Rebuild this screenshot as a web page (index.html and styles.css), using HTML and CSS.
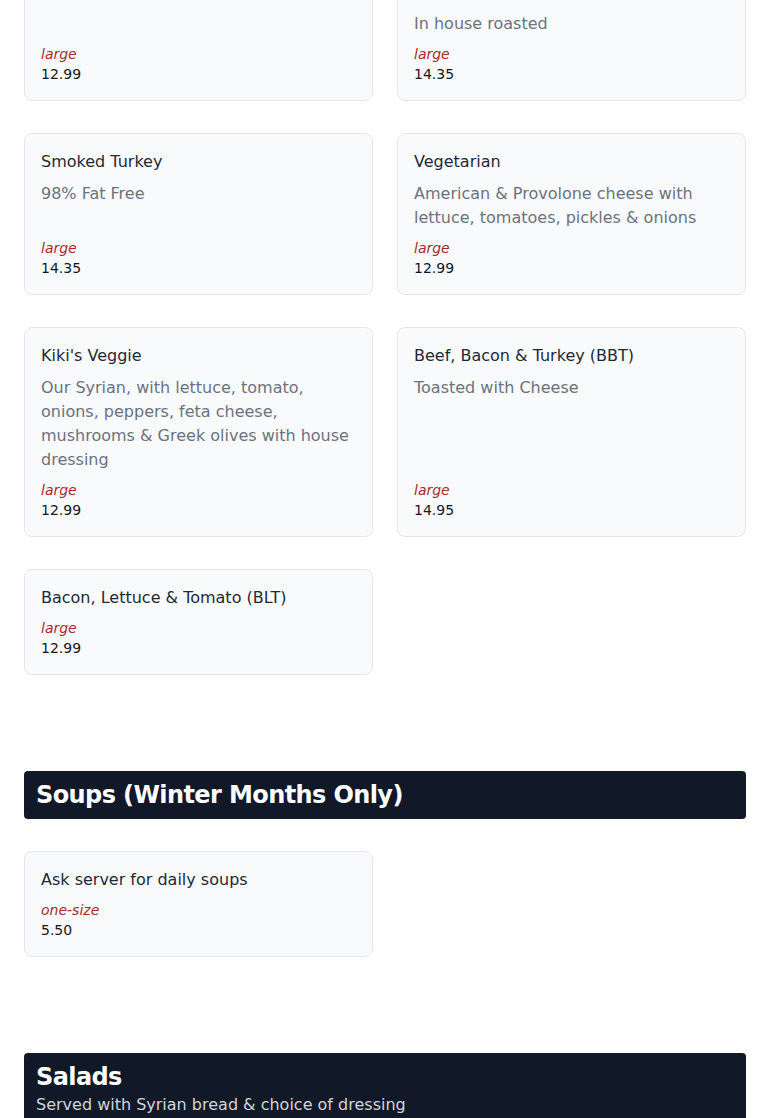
FILE: index.html
```html
<!DOCTYPE html>
<html lang="en">
<head>
<meta charset="utf-8">
<title>Menu</title>
<link rel="stylesheet" href="styles.css">
</head>
<body>
<main class="menu">
  <section class="section section-cut">
    <div class="grid">
      <article class="card">
        <h3 class="item-name">Ham &amp; Cheese</h3>
        <div class="price-block">
          <div class="size">large</div>
          <div class="price">12.99</div>
        </div>
      </article>
      <article class="card">
        <h3 class="item-name">Roast Beef</h3>
        <p class="item-desc">In house roasted</p>
        <div class="price-block">
          <div class="size">large</div>
          <div class="price">14.35</div>
        </div>
      </article>
      <article class="card">
        <h3 class="item-name">Smoked Turkey</h3>
        <p class="item-desc">98% Fat Free</p>
        <div class="price-block">
          <div class="size">large</div>
          <div class="price">14.35</div>
        </div>
      </article>
      <article class="card">
        <h3 class="item-name">Vegetarian</h3>
        <p class="item-desc">American &amp; Provolone cheese with lettuce, tomatoes, pickles &amp; onions</p>
        <div class="price-block">
          <div class="size">large</div>
          <div class="price">12.99</div>
        </div>
      </article>
      <article class="card">
        <h3 class="item-name">Kiki's Veggie</h3>
        <p class="item-desc">Our Syrian, with lettuce, tomato, onions, peppers, feta cheese, mushrooms &amp; Greek olives with house dressing</p>
        <div class="price-block">
          <div class="size">large</div>
          <div class="price">12.99</div>
        </div>
      </article>
      <article class="card">
        <h3 class="item-name">Beef, Bacon &amp; Turkey (BBT)</h3>
        <p class="item-desc">Toasted with Cheese</p>
        <div class="price-block">
          <div class="size">large</div>
          <div class="price">14.95</div>
        </div>
      </article>
      <article class="card">
        <h3 class="item-name">Bacon, Lettuce &amp; Tomato (BLT)</h3>
        <div class="price-block">
          <div class="size">large</div>
          <div class="price">12.99</div>
        </div>
      </article>
    </div>
  </section>

  <section class="section">
    <header class="section-header">
      <h2 class="section-title">Soups (Winter Months Only)</h2>
    </header>
    <div class="grid">
      <article class="card">
        <h3 class="item-name">Ask server for daily soups</h3>
        <div class="price-block">
          <div class="size">one-size</div>
          <div class="price">5.50</div>
        </div>
      </article>
    </div>
  </section>

  <section class="section">
    <header class="section-header">
      <h2 class="section-title">Salads</h2>
      <p class="section-sub">Served with Syrian bread &amp; choice of dressing</p>
    </header>
  </section>
</main>
</body>
</html>
```

FILE: styles.css
```css
* {
  box-sizing: border-box;
}

html, body {
  margin: 0;
  padding: 0;
  background: #ffffff;
}

body {
  font-family: "DejaVu Sans", Verdana, sans-serif;
  color: #111827;
}

.menu {
  padding: 0 24px;
  overflow: hidden;
}

.section {
  margin-bottom: 96px;
}

.section-cut {
  margin-top: -37px;
}

.grid {
  display: grid;
  grid-template-columns: 1fr 1fr;
  column-gap: 24px;
  row-gap: 32px;
}

.card {
  display: flex;
  flex-direction: column;
  gap: 8px;
  background: #f9fafb;
  border: 1px solid #e5e7eb;
  border-radius: 8px;
  padding: 16px;
}

.item-name {
  margin: 0;
  font-size: 16px;
  line-height: 24px;
  font-weight: 400;
  color: #1f2937;
}

.item-desc {
  margin: 0;
  font-size: 16px;
  line-height: 24px;
  color: #6b7280;
}

.price-block {
  margin-top: auto;
}

.size {
  font-size: 14px;
  line-height: 20px;
  font-style: italic;
  color: #a62c2c;
}

.price {
  font-size: 14px;
  line-height: 20px;
  color: #111827;
}

.section-header {
  background: #111827;
  border-radius: 4px;
  padding: 8px 12px;
  margin-bottom: 32px;
}

.section-title {
  margin: 0;
  font-size: 24px;
  line-height: 32px;
  font-weight: 700;
  letter-spacing: -0.025em;
  color: #ffffff;
}

.section-sub {
  margin: 0;
  font-size: 16px;
  line-height: 24px;
  color: #d1d5db;
}
```
